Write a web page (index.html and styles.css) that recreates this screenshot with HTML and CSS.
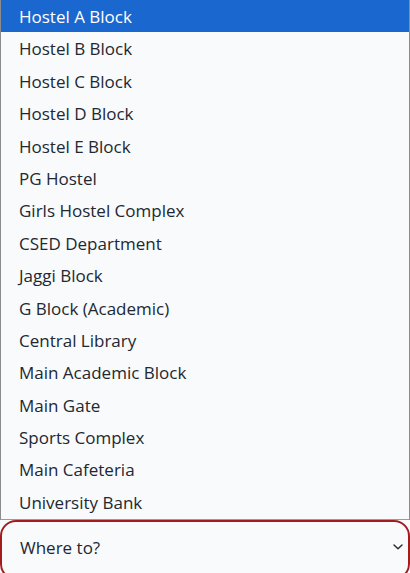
FILE: index.html
```html
<!DOCTYPE html>
<html>
<head>
<meta charset="utf-8">
<link rel="stylesheet" href="styles.css">
</head>
<body>
<div class="list">
  <div class="item active">Hostel A Block</div>
  <div class="item">Hostel B Block</div>
  <div class="item">Hostel C Block</div>
  <div class="item">Hostel D Block</div>
  <div class="item">Hostel E Block</div>
  <div class="item">PG Hostel</div>
  <div class="item">Girls Hostel Complex</div>
  <div class="item">CSED Department</div>
  <div class="item">Jaggi Block</div>
  <div class="item">G Block (Academic)</div>
  <div class="item">Central Library</div>
  <div class="item">Main Academic Block</div>
  <div class="item">Main Gate</div>
  <div class="item">Sports Complex</div>
  <div class="item">Main Cafeteria</div>
  <div class="item">University Bank</div>
</div>
<div class="select">
  <span class="placeholder">Where to?</span>
  <svg class="chev" width="12" height="8" viewBox="0 0 12 8"><path d="M2 2 L6 5.8 L10 2" fill="none" stroke="#2b2f36" stroke-width="1.5" stroke-linecap="round" stroke-linejoin="round"/></svg>
</div>
</body>
</html>
```
FILE: styles.css
```css
html, body {
  margin: 0;
  padding: 0;
  background: #f8fafc;
  overflow: hidden;
}
body {
  width: 410px;
  height: 573px;
  font-family: "Open Sans", "Noto Sans", sans-serif;
  color: #222831;
}
.list {
  box-sizing: border-box;
  height: 520px;
  border-left: 1px solid #8c8c8c;
  border-right: 1px solid #8c8c8c;
  border-bottom: 1px solid #9a9a9a;
  background: #f8fafc;
}
.item {
  height: 32.4px;
  line-height: 34px;
  padding-left: 18px;
  font-size: 17px;
  white-space: nowrap;
}
.item.active {
  background: #1a67d0;
  color: #ffffff;
}
.select {
  box-sizing: border-box;
  height: 60px;
  border: 2px solid #a31d1d;
  border-radius: 16px;
  display: flex;
  align-items: center;
  justify-content: space-between;
  padding: 0 4px 6px 18px;
  font-size: 17px;
  background: #f8fafc;
}
.chev {
  display: block;
}
```
